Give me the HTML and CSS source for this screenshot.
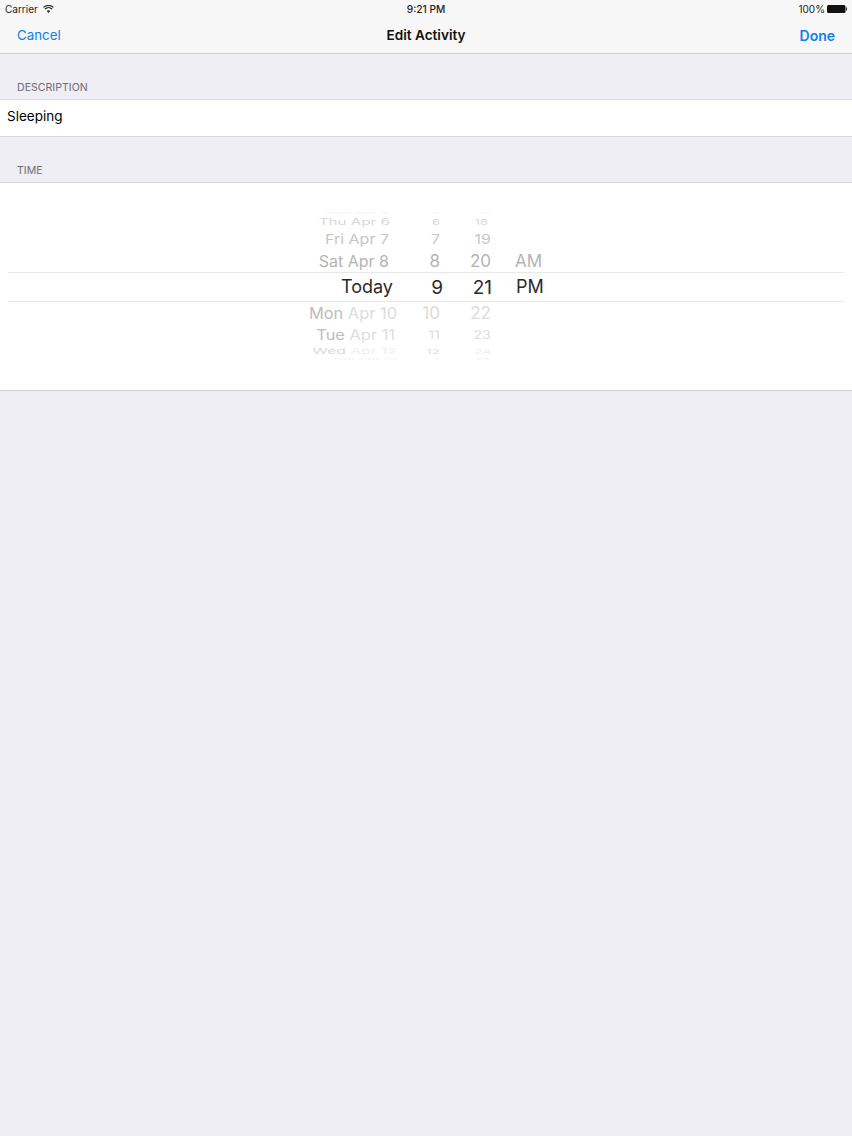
FILE: index.html
```html
<!DOCTYPE html>
<html lang="en">
<head>
  <meta charset="UTF-8">
  <meta name="viewport" content="width=device-width, initial-scale=1.0">
  <title>Edit Activity</title>
  <link rel="stylesheet" href="styles.css">
</head>
<body>
  <header class="top">
    <div class="status">
      <div class="status-left">
        <span>Carrier</span>
        <svg class="wifi" width="11" height="8" viewBox="0 0 12 9">
          <path d="M6 9 4 6.7a3 3 0 0 1 4 0z" fill="#222"/>
          <path d="M1.9 4.5a6 6 0 0 1 8.2 0" fill="none" stroke="#222" stroke-width="1.3"/>
          <path d="M.4 2.7a8.2 8.2 0 0 1 11.2 0" fill="none" stroke="#222" stroke-width="1.3"/>
        </svg>
      </div>
      <div class="status-time">9:21 PM</div>
      <div class="status-right">
        <span>100%</span>
        <svg class="battery" width="20" height="8" viewBox="0 0 20 8">
          <rect width="18.5" height="8" rx="1.5" fill="#111"/>
          <rect x="19" y="2.5" width="1" height="3" fill="#333"/>
        </svg>
      </div>
    </div>
    <nav class="navbar">
      <a class="nav-btn">Cancel</a>
      <h1 class="nav-title">Edit Activity</h1>
      <a class="nav-btn nav-done">Done</a>
    </nav>
  </header>

  <h2 class="section-label">DESCRIPTION</h2>
  <div class="text-row">Sleeping</div>

  <h2 class="section-label">TIME</h2>
  <section class="picker">
    <div class="wheel-row r-edge-top">
      <span class="date">Wed Apr 5</span><span class="hour">5</span><span class="min">17</span><span></span>
    </div>
    <div class="wheel-row r-thu">
      <span class="date">Thu Apr 6</span><span class="hour">6</span><span class="min">18</span><span></span>
    </div>
    <div class="wheel-row r-fri">
      <span class="date">Fri Apr 7</span><span class="hour">7</span><span class="min">19</span><span></span>
    </div>
    <div class="wheel-row r-sat">
      <span class="date">Sat Apr 8</span><span class="hour">8</span><span class="min">20</span><span class="ampm">AM</span>
    </div>
    <div class="wheel-row r-today">
      <span class="date">Today</span><span class="hour">9</span><span class="min">21</span><span class="ampm">PM</span>
    </div>
    <div class="wheel-row r-mon">
      <span class="date"><b>Mon</b> Apr 10</span><span class="hour">10</span><span class="min">22</span><span></span>
    </div>
    <div class="wheel-row r-tue">
      <span class="date"><b>Tue</b> Apr 11</span><span class="hour">11</span><span class="min">23</span><span></span>
    </div>
    <div class="wheel-row r-wed">
      <span class="date"><b>Wed</b> Apr 12</span><span class="hour">12</span><span class="min">24</span><span></span>
    </div>
    <div class="wheel-row r-edge-bottom">
      <span class="date">Thu Apr 13</span><span class="hour">1</span><span class="min">25</span><span></span>
    </div>
  </section>
</body>
</html>
```
FILE: styles.css
```css
* {
  box-sizing: border-box;
}

html, body {
  height: 100%;
}

body {
  margin: 0;
  background: #efeef4;
  color: #000;
  font-family: Inter, 'Liberation Sans', sans-serif;
  overflow: hidden;
}

.top {
  height: 54px;
  background: #f7f7f8;
  border-bottom: 1px solid #cfcfd2;
}

.status {
  height: 18px;
  padding: 0 5px;
  display: grid;
  grid-template-columns: 1fr auto 1fr;
  align-items: center;
  font-size: 10px;
  color: #222;
}

.status-left {
  display: flex;
  align-items: center;
  gap: 5px;
}

.status-time {
  font-size: 10.2px;
  font-weight: 500;
}

.status-right {
  display: flex;
  justify-content: flex-end;
  align-items: center;
  gap: 2px;
}

.navbar {
  height: 34px;
  padding: 0 17px;
  display: grid;
  grid-template-columns: 1fr auto 1fr;
  align-items: center;
}

.nav-btn {
  font-size: 13.3px;
  color: #0f80e8;
}

.nav-done {
  font-size: 14px;
  font-weight: 600;
  text-align: right;
}

.nav-title {
  margin: 0;
  font-size: 13.6px;
  font-weight: 600;
  color: #111;
}

.section-label {
  margin: 0;
  height: 45px;
  padding: 27px 0 0 17px;
  font-size: 10.6px;
  font-weight: 400;
  line-height: 13px;
  color: #6d6d72;
}

.text-row {
  height: 38px;
  padding-left: 7px;
  background: #fff;
  border-top: 1px solid #d8d8da;
  border-bottom: 1px solid #d8d8da;
  font-size: 13.5px;
  line-height: 32px;
}

.picker {
  height: 209px;
  padding-top: 27px;
  background: #fff;
  border-top: 1px solid #d8d8da;
  border-bottom: 1px solid #d0d0d2;
}

.wheel-row {
  display: grid;
  grid-template-columns: 397px 43px 51px 1fr;
  align-items: center;
  align-content: center;
  white-space: nowrap;
  line-height: 1;
  color: #b4b4b4;
  font-size: 16px;
}

.wheel-row span {
  display: block;
  text-align: right;
}

.wheel-row .ampm {
  padding-left: 24px;
  text-align: left;
}

.wheel-row b {
  font-weight: 400;
}

.r-edge-top {
  height: 6px;
  color: #f2f2f2;
  font-size: 13px;
}

.r-edge-top span,
.r-edge-bottom span {
  transform: scaleY(0.2);
}

.r-edge-top .date {
  padding-right: 8px;
}

.r-thu {
  height: 12px;
  color: #d8d8d8;
  font-size: 15.2px;
}

.r-thu span {
  transform: scaleY(0.6);
}

.r-thu .date {
  padding-right: 7px;
}

.r-thu .hour,
.r-thu .min {
  font-size: 13px;
}

.r-thu .min {
  padding-right: 3px;
}

.r-fri {
  height: 20px;
  padding-top: 1px;
  color: #c6c6c6;
  font-size: 16px;
}

.r-fri span {
  transform: scaleY(0.85);
}

.r-fri .date {
  padding-right: 8px;
}

.r-sat {
  height: 24px;
  padding-top: 2px;
}

.r-sat .date {
  padding-right: 8px;
}

.r-sat .hour,
.r-sat .min,
.r-sat .ampm {
  font-size: 17px;
}

.r-today {
  height: 30px;
  margin: 0 8px;
  grid-template-columns: 389px 46px 49px 1fr;
  border-top: 1px solid #e9e9e9;
  border-bottom: 1px solid #e9e9e9;
  color: #2a2a2a;
  font-size: 18px;
}

.r-today .date {
  padding-right: 4px;
}

.r-today .hour,
.r-today .min {
  font-size: 19px;
}

.r-today .ampm {
  padding-left: 24px;
  font-size: 18px;
}

.r-mon {
  height: 22px;
  color: #dcdcdc;
  font-size: 16.4px;
}

.r-mon .hour,
.r-mon .min {
  font-size: 17px;
}

.r-mon b,
.r-tue b {
  color: #bdbdbd;
}

.r-tue {
  height: 22px;
  padding-top: 1px;
  color: #dedede;
  font-size: 16.4px;
}

.r-tue span {
  transform: scaleY(0.85);
}

.r-tue .date {
  padding-right: 2px;
}

.r-tue .hour,
.r-tue .min {
  font-size: 14.5px;
}

.r-wed {
  height: 10px;
  padding-top: 1px;
  color: #eeeeee;
  font-size: 15.7px;
}

.r-wed span {
  transform: scaleY(0.5);
}

.r-wed b {
  color: #dadada;
}

.r-wed .hour {
  color: #dddddd;
  font-size: 13.5px;
}

.r-wed .min {
  font-size: 13.5px;
}

.r-edge-bottom {
  height: 7px;
  color: #f3f3f3;
  font-size: 13px;
}
```
